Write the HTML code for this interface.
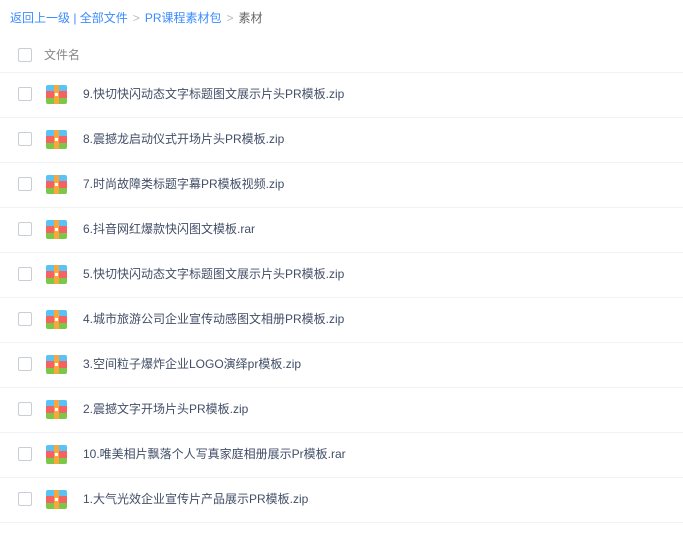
<!DOCTYPE html>
<html><head><meta charset="utf-8"><style>
body{margin:0;width:683px;height:534px;background:#fff;font-family:"Liberation Sans","Noto Sans CJK SC",sans-serif;font-size:12px;color:#424e67;overflow:hidden;position:relative}
.bc{position:absolute;left:10px;top:9px;color:#3b8cff;}
.bc .g{color:#bbb;margin:0 5px}
.bc .c{color:#666}
.hd{position:absolute;left:0;top:40px;width:683px;height:32px;border-bottom:1px solid #f0f2f5}
.cb{position:absolute;left:18px;width:12px;height:12px;border:1px solid #c9cdd4;border-radius:2px;background:#fff}
.row{position:absolute;left:0;width:683px;height:44px;border-bottom:1px solid #f0f2f5}
.ic{position:absolute;left:46px;top:12px;width:21px;height:19px;border-radius:2px;overflow:hidden}
.ic .b{height:6px;background:#5ac3f5}.ic .r{height:7px;background:#f6625f}.ic .gr{height:6px;background:#7dc748}
.ic .o{position:absolute;left:8px;top:0;width:5px;height:19px;background:#f9a63a}
.ic .w{position:absolute;left:9px;top:8px;width:3px;height:3px;background:#fff}
.nm{position:absolute;left:83px;top:12px;color:#424e67}
</style></head><body>
<div class="bc">返回上一级 | 全部文件<span class="g">&gt;</span>PR课程素材包<span class="g">&gt;</span><span class="c">素材</span></div>
<div class="hd"><div class="cb" style="top:8px"></div><span style="position:absolute;left:44px;top:6px;color:#888">文件名</span></div>
<div class="row" style="top:73px"><div class="cb" style="top:14px"></div><div class="ic"><div class="b"></div><div class="r"></div><div class="gr"></div><div class="o"></div><div class="w"></div></div><div class="nm">9.快切快闪动态文字标题图文展示片头PR模板.zip</div></div>
<div class="row" style="top:118px"><div class="cb" style="top:14px"></div><div class="ic"><div class="b"></div><div class="r"></div><div class="gr"></div><div class="o"></div><div class="w"></div></div><div class="nm">8.震撼龙启动仪式开场片头PR模板.zip</div></div>
<div class="row" style="top:163px"><div class="cb" style="top:14px"></div><div class="ic"><div class="b"></div><div class="r"></div><div class="gr"></div><div class="o"></div><div class="w"></div></div><div class="nm">7.时尚故障类标题字幕PR模板视频.zip</div></div>
<div class="row" style="top:208px"><div class="cb" style="top:14px"></div><div class="ic"><div class="b"></div><div class="r"></div><div class="gr"></div><div class="o"></div><div class="w"></div></div><div class="nm">6.抖音网红爆款快闪图文模板.rar</div></div>
<div class="row" style="top:253px"><div class="cb" style="top:14px"></div><div class="ic"><div class="b"></div><div class="r"></div><div class="gr"></div><div class="o"></div><div class="w"></div></div><div class="nm">5.快切快闪动态文字标题图文展示片头PR模板.zip</div></div>
<div class="row" style="top:298px"><div class="cb" style="top:14px"></div><div class="ic"><div class="b"></div><div class="r"></div><div class="gr"></div><div class="o"></div><div class="w"></div></div><div class="nm">4.城市旅游公司企业宣传动感图文相册PR模板.zip</div></div>
<div class="row" style="top:343px"><div class="cb" style="top:14px"></div><div class="ic"><div class="b"></div><div class="r"></div><div class="gr"></div><div class="o"></div><div class="w"></div></div><div class="nm">3.空间粒子爆炸企业LOGO演绎pr模板.zip</div></div>
<div class="row" style="top:388px"><div class="cb" style="top:14px"></div><div class="ic"><div class="b"></div><div class="r"></div><div class="gr"></div><div class="o"></div><div class="w"></div></div><div class="nm">2.震撼文字开场片头PR模板.zip</div></div>
<div class="row" style="top:433px"><div class="cb" style="top:14px"></div><div class="ic"><div class="b"></div><div class="r"></div><div class="gr"></div><div class="o"></div><div class="w"></div></div><div class="nm">10.唯美相片飘落个人写真家庭相册展示Pr模板.rar</div></div>
<div class="row" style="top:478px"><div class="cb" style="top:14px"></div><div class="ic"><div class="b"></div><div class="r"></div><div class="gr"></div><div class="o"></div><div class="w"></div></div><div class="nm">1.大气光效企业宣传片产品展示PR模板.zip</div></div>
</body></html>
